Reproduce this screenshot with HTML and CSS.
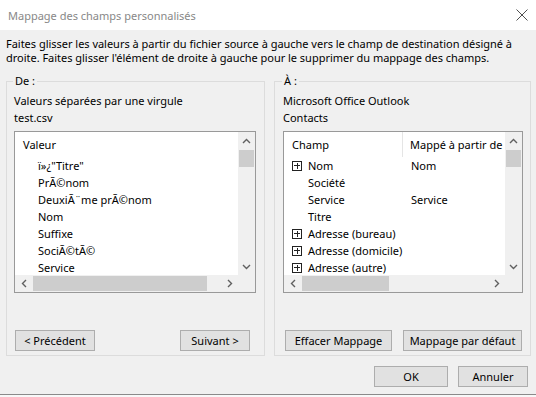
FILE: index.html
```html
<!DOCTYPE html>
<html lang="fr">
<head>
<meta charset="utf-8">
<title>Mappage des champs personnalisés</title>
<link rel="stylesheet" href="styles.css">
</head>
<body>
<div class="window">
  <div class="titlebar">
    <span class="title">Mappage des champs personnalisés</span>
    <svg class="close" width="12" height="12" viewBox="0 0 12 12"><path d="M0.5 0.5 L11.5 11.5 M11.5 0.5 L0.5 11.5" stroke="#505050" stroke-width="1" fill="none"/></svg>
  </div>
  <div class="content">
    <p class="intro">Faites glisser les valeurs à partir du fichier source à gauche vers le champ de destination désigné à<br>droite. Faites glisser l'élément de droite à gauche pour le supprimer du mappage des champs.</p>
    <div class="groups">
      <fieldset class="group group-left">
        <legend>De :</legend>
        <div class="line">Valeurs séparées par une virgule</div>
        <div class="line">test.csv</div>
        <div class="listbox">
          <div class="list-content">
            <div class="list-header"><span class="hcell">Valeur</span></div>
            <div class="row"><span class="indent">ï»¿"Titre"</span></div>
            <div class="row"><span class="indent">PrÃ©nom</span></div>
            <div class="row"><span class="indent">DeuxiÃ¨me prÃ©nom</span></div>
            <div class="row"><span class="indent">Nom</span></div>
            <div class="row"><span class="indent">Suffixe</span></div>
            <div class="row"><span class="indent">SociÃ©tÃ©</span></div>
            <div class="row"><span class="indent">Service</span></div>
          </div>
          <div class="vscroll">
            <div class="sbtn"><svg width="9" height="6" viewBox="0 0 9 6"><polyline points="1,5 4.5,1.5 8,5" fill="none" stroke="#606060" stroke-width="1.4"/></svg></div>
            <div class="vtrack"><div class="vthumb"></div></div>
            <div class="sbtn"><svg width="9" height="6" viewBox="0 0 9 6"><polyline points="1,1 4.5,4.5 8,1" fill="none" stroke="#606060" stroke-width="1.4"/></svg></div>
          </div>
          <div class="hscroll">
            <div class="sbtn"><svg width="6" height="9" viewBox="0 0 6 9"><polyline points="5,1 1.5,4.5 5,8" fill="none" stroke="#606060" stroke-width="1.4"/></svg></div>
            <div class="htrack"><div class="hthumb thumb-left"></div></div>
            <div class="sbtn"><svg width="6" height="9" viewBox="0 0 6 9"><polyline points="1,1 4.5,4.5 1,8" fill="none" stroke="#606060" stroke-width="1.4"/></svg></div>
          </div>
          <div class="corner"></div>
        </div>
        <div class="btnrow btnrow-left">
          <button class="btn w-prec">&lt; Précédent</button>
          <button class="btn w-suiv">Suivant &gt;</button>
        </div>
      </fieldset>
      <fieldset class="group group-right">
        <legend>À :</legend>
        <div class="line">Microsoft Office Outlook</div>
        <div class="line">Contacts</div>
        <div class="listbox listbox-right">
          <div class="list-content">
            <div class="list-header cols"><span class="hcell c1">Champ</span><span class="hcell c2">Mappé à partir de</span></div>
            <div class="row cols"><span class="c1"><span class="plus"></span>Nom</span><span class="c2">Nom</span></div>
            <div class="row cols"><span class="c1"><span class="noplus"></span>Société</span><span class="c2"></span></div>
            <div class="row cols"><span class="c1"><span class="noplus"></span>Service</span><span class="c2">Service</span></div>
            <div class="row cols"><span class="c1"><span class="noplus"></span>Titre</span><span class="c2"></span></div>
            <div class="row cols"><span class="c1"><span class="plus"></span>Adresse (bureau)</span><span class="c2"></span></div>
            <div class="row cols"><span class="c1"><span class="plus"></span>Adresse (domicile)</span><span class="c2"></span></div>
            <div class="row cols"><span class="c1"><span class="plus"></span>Adresse (autre)</span><span class="c2"></span></div>
          </div>
          <div class="vscroll">
            <div class="sbtn"><svg width="9" height="6" viewBox="0 0 9 6"><polyline points="1,5 4.5,1.5 8,5" fill="none" stroke="#606060" stroke-width="1.4"/></svg></div>
            <div class="vtrack"><div class="vthumb"></div></div>
            <div class="sbtn"><svg width="9" height="6" viewBox="0 0 9 6"><polyline points="1,1 4.5,4.5 8,1" fill="none" stroke="#606060" stroke-width="1.4"/></svg></div>
          </div>
          <div class="hscroll">
            <div class="sbtn"><svg width="6" height="9" viewBox="0 0 6 9"><polyline points="5,1 1.5,4.5 5,8" fill="none" stroke="#606060" stroke-width="1.4"/></svg></div>
            <div class="htrack"><div class="hthumb thumb-right"></div></div>
            <div class="sbtn"><svg width="6" height="9" viewBox="0 0 6 9"><polyline points="1,1 4.5,4.5 1,8" fill="none" stroke="#606060" stroke-width="1.4"/></svg></div>
          </div>
          <div class="corner"></div>
        </div>
        <div class="btnrow btnrow-right">
          <button class="btn w-eff">Effacer Mappage</button>
          <button class="btn w-def">Mappage par défaut</button>
        </div>
      </fieldset>
    </div>
    <div class="footer">
      <button class="btn w-ok">OK</button>
      <button class="btn w-ann">Annuler</button>
    </div>
  </div>
  <div class="bottom-edge"></div>
</div>
</body>
</html>
```
FILE: styles.css
```css
* { box-sizing: border-box; }
html, body {
  margin: 0;
  padding: 0;
}
body {
  width: 536px;
  height: 397px;
  overflow: hidden;
  background: #f0f0f0;
  font-family: "Noto Sans", "Open Sans", sans-serif;
  font-size: 11px;
  color: #000;
}
.window {
  width: 536px;
  height: 397px;
  display: flex;
  flex-direction: column;
}
.titlebar {
  height: 30px;
  background: #fff;
  display: flex;
  align-items: center;
  justify-content: space-between;
  padding: 0 8px 0 8px;
  flex: none;
}
.title {
  color: #888;
  font-size: 11px;
}
.content {
  padding: 7px 5px 0 6px;
  flex: none;
}
.intro {
  margin: 0;
  line-height: 13.5px;
  white-space: nowrap;
  letter-spacing: -0.02px;
}
.groups {
  display: flex;
  gap: 9px;
  margin-top: 10px;
}
.group {
  margin: 0;
  border: 1px solid #dcdcdc;
  padding: 4px 8px 4px 7px;
  min-width: 0;
}
.group-left { width: 259px; }
.group-right { width: 257px; padding-left: 8px; padding-right: 7px; }
.group legend {
  padding: 0 2px;
  margin-left: -1px;
  line-height: 14px;
}
.line {
  line-height: 17px;
  white-space: nowrap;
}
.listbox {
  margin-top: 5px;
  height: 162px;
  width: 242px;
  border: 1px solid #999;
  background: #fff;
  display: grid;
  grid-template-columns: 1fr 17px;
  grid-template-rows: 1fr 17px;
}
.listbox-right { width: 240px; }
.list-content {
  overflow: hidden;
  min-width: 0;
}
.list-header {
  height: 25px;
  display: flex;
  align-items: center;
  white-space: nowrap;
}
.hcell { padding-left: 8px; }
.row {
  height: 17px;
  line-height: 17px;
  white-space: nowrap;
}
.indent { padding-left: 23px; }
.cols {
  display: grid;
  grid-template-columns: 119px 1fr;
}
.list-header.cols { align-items: stretch; }
.list-header.cols .hcell {
  display: flex;
  align-items: center;
}
.list-header .c1 { border-right: 1px solid #e5e5e5; }
.row .c1 {
  display: flex;
  align-items: center;
  padding-left: 8px;
}
.row .c2 { padding-left: 8px; }
.list-header .c2 { padding-left: 7px; }
.plus, .noplus {
  width: 10px;
  height: 10px;
  margin-right: 6px;
  flex: none;
  position: relative;
}
.plus {
  border: 1px solid #222;
}
.plus::before, .plus::after {
  content: "";
  position: absolute;
  background: #222;
}
.plus::before { left: 1px; right: 1px; top: 3.5px; height: 1px; }
.plus::after { top: 1px; bottom: 1px; left: 3.5px; width: 1px; }
.vscroll {
  background: #f0f0f0;
  display: flex;
  flex-direction: column;
}
.sbtn {
  width: 17px;
  height: 17px;
  flex: none;
  display: flex;
  align-items: center;
  justify-content: center;
}
.vtrack {
  flex: 1;
  padding: 1px 1px;
}
.vthumb {
  height: 17px;
  background: #cdcdcd;
}
.hscroll {
  background: #f0f0f0;
  display: flex;
}
.htrack {
  flex: 1;
  padding: 1px 1px;
  display: flex;
}
.hthumb {
  height: 15px;
  background: #cdcdcd;
}
.thumb-left { width: 174px; }
.thumb-right { width: 87px; }
.corner { background: #f0f0f0; }
.btnrow {
  display: flex;
  justify-content: space-between;
  margin-top: 37px;
}
.btnrow-left { padding: 0 6px 0 1px; }
.btnrow-right { padding: 0 1px 0 2px; }
.btn {
  height: 21px;
  border: 1px solid #adadad;
  background: #e1e1e1;
  font: inherit;
  color: #000;
  padding: 0;
  margin: 0;
  text-align: center;
  white-space: nowrap;
}
.w-prec { width: 80px; }
.w-suiv { width: 70px; }
.w-eff { width: 107px; }
.w-def { width: 119px; }
.w-ok { width: 74px; }
.w-ann { width: 70px; }
.footer {
  display: flex;
  justify-content: flex-end;
  gap: 10px;
  margin-top: 10px;
  padding-right: 3px;
}
.bottom-edge {
  margin-top: 7px;
  border-top: 1px solid #8a8a8a;
  height: 3px;
  background: #f8f8f8;
  flex: none;
}
```
